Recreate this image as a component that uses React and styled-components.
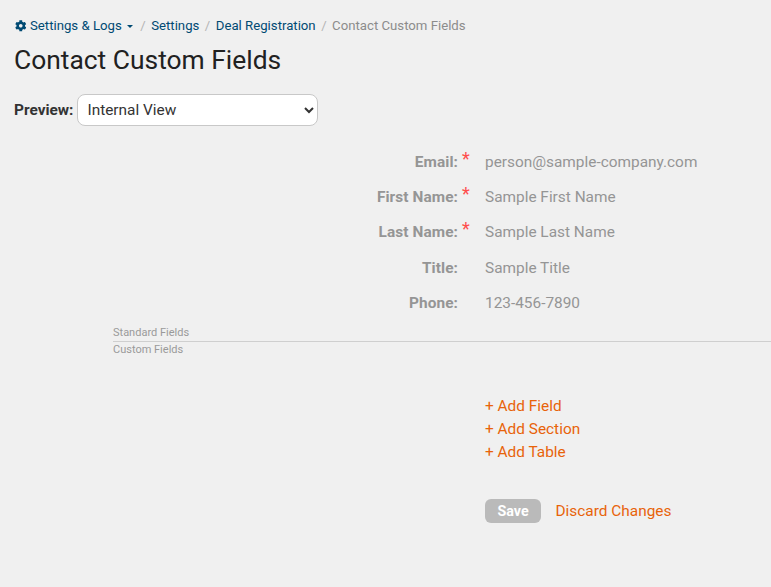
import styled, { createGlobalStyle } from "styled-components";

const GlobalStyle = createGlobalStyle`
  html, body {
    margin: 0;
    padding: 0;
    background: #f0f0f0;
    font-family: Roboto, "Liberation Sans", sans-serif;
  }
`;

const Page = styled.div`
  width: 771px;
  height: 587px;
  overflow: hidden;
  box-sizing: border-box;
  padding-top: 17px;
  background: #f0f0f0;
`;

const Breadcrumb = styled.nav`
  display: flex;
  align-items: center;
  height: 18px;
  padding-left: 15px;
  font-size: 13.2px;
  line-height: 18px;
`;

const CrumbLink = styled.a`
  display: flex;
  align-items: center;
  color: #004a73;
`;

const Gear = styled.svg`
  width: 11.5px;
  height: 11.5px;
  margin-right: 3.5px;
  fill: #004a73;
`;

const Caret = styled.span`
  width: 0;
  height: 0;
  margin: 0 2px 0 5px;
  border-top: 3.5px solid #004a73;
  border-left: 3.5px solid transparent;
  border-right: 3.5px solid transparent;
`;

const Slash = styled.span`
  margin: 0 5.5px;
  color: #b5b5b5;
`;

const CrumbCurrent = styled.span`
  color: #8c8c8c;
`;

const Title = styled.h1`
  margin: 8px 0 0 14px;
  font-size: 26.4px;
  line-height: 34px;
  font-weight: 400;
  color: #212121;
`;

const PreviewRow = styled.div`
  display: flex;
  align-items: center;
  gap: 4px;
  margin: 17px 0 0 14px;
`;

const PreviewLabel = styled.label`
  font-size: 15.4px;
  font-weight: 700;
  color: #333;
`;

const PreviewSelect = styled.select`
  width: 241px;
  height: 32px;
  box-sizing: border-box;
  padding: 0 5px;
  border: 1px solid #c8c8c8;
  border-radius: 8px;
  background: #fff;
  color: #333;
  font-family: inherit;
  font-size: 15.4px;
`;

const Fields = styled.div`
  display: flex;
  flex-direction: column;
  margin-top: 18.5px;
`;

const FieldRow = styled.div`
  display: grid;
  grid-template-columns: 458px 27px 1fr;
  height: 35.2px;
  align-items: center;
  font-size: 15.4px;
  color: #959595;
`;

const FieldLabel = styled.div`
  text-align: right;
  font-weight: 700;
  letter-spacing: 0.08px;
`;

const Required = styled.span`
  justify-self: start;
  margin: -7px 0 0 4px;
  color: #ff4d4d;
  font-size: 18px;
  line-height: 18px;
`;

const FieldValue = styled.div`
  grid-column: 3;
`;

const SectionDivider = styled.div`
  margin: 5.5px 0 0 113px;
  font-size: 11px;
  line-height: 13px;
  color: #9a9a9a;
`;

const SectionName = styled.div`
  padding: ${(props) => (props.$top ? "0 0 2px" : "1px 0 0")};
  border-bottom: ${(props) => (props.$top ? "1px solid #cfcfcf" : "none")};
`;

const Actions = styled.div`
  display: flex;
  flex-direction: column;
  gap: 4px;
  margin: 41px 0 0 485px;
`;

const OrangeLink = styled.a`
  font-size: 15.4px;
  line-height: 19px;
  color: #e8630a;
`;

const DiscardLink = styled(OrangeLink)`
  margin-top: 2px;
`;

const Footer = styled.div`
  display: flex;
  align-items: center;
  gap: 14.5px;
  margin: 37px 0 0 485px;
`;

const SaveButton = styled.button`
  width: 56px;
  height: 24px;
  padding: 0;
  border: 0;
  border-radius: 6px;
  background: #bababa;
  color: #fff;
  font-family: inherit;
  font-size: 14.3px;
  font-weight: 700;
`;

const fields = [
  { label: "Email:", value: "person@sample-company.com", required: true },
  { label: "First Name:", value: "Sample First Name", required: true },
  { label: "Last Name:", value: "Sample Last Name", required: true },
  { label: "Title:", value: "Sample Title" },
  { label: "Phone:", value: "123-456-7890" },
];

export default function App() {
  return (
    <Page>
      <GlobalStyle />
      <Breadcrumb>
        <CrumbLink>
          <Gear viewBox="0 0 512 512">
            <path d="M487.4 315.7l-42.6-24.6c4.3-23.2 4.3-47 0-70.2l42.6-24.6c4.9-2.8 7.1-8.6 5.5-14-11.1-35.6-30-67.8-54.7-94.6-3.8-4.1-10-5.1-14.8-2.3L380.8 110c-17.9-15.4-38.5-27.3-60.8-35.1V25.8c0-5.6-3.9-10.5-9.4-11.7-36.7-8.2-74.3-7.8-109.2 0-5.5 1.2-9.4 6.1-9.4 11.7V75c-22.2 7.9-42.8 19.8-60.8 35.1L88.7 85.5c-4.9-2.8-11-1.9-14.8 2.3-24.7 26.7-43.6 58.9-54.7 94.6-1.7 5.4.6 11.2 5.5 14L67.3 221c-4.3 23.2-4.3 47 0 70.2l-42.6 24.6c-4.9 2.8-7.1 8.6-5.5 14 11.1 35.6 30 67.8 54.7 94.6 3.8 4.1 10 5.1 14.8 2.3l42.6-24.6c17.9 15.4 38.5 27.3 60.8 35.1v49.2c0 5.6 3.9 10.5 9.4 11.7 36.7 8.2 74.3 7.8 109.2 0 5.5-1.2 9.4-6.1 9.4-11.7v-49.2c22.2-7.9 42.8-19.8 60.8-35.1l42.6 24.6c4.9 2.8 11 1.9 14.8-2.3 24.7-26.7 43.6-58.9 54.7-94.6 1.5-5.5-.7-11.3-5.6-14.1zM256 336c-44.1 0-80-35.9-80-80s35.9-80 80-80 80 35.9 80 80-35.9 80-80 80z" />
          </Gear>
          Settings &amp; Logs
          <Caret />
        </CrumbLink>
        <Slash>/</Slash>
        <CrumbLink>Settings</CrumbLink>
        <Slash>/</Slash>
        <CrumbLink>Deal Registration</CrumbLink>
        <Slash>/</Slash>
        <CrumbCurrent>Contact Custom Fields</CrumbCurrent>
      </Breadcrumb>
      <Title>Contact Custom Fields</Title>
      <PreviewRow>
        <PreviewLabel>Preview:</PreviewLabel>
        <PreviewSelect defaultValue="internal">
          <option value="internal">Internal View</option>
          <option value="partner">Partner View</option>
        </PreviewSelect>
      </PreviewRow>
      <Fields>
        {fields.map((field) => (
          <FieldRow key={field.label}>
            <FieldLabel>{field.label}</FieldLabel>
            {field.required && <Required>*</Required>}
            <FieldValue>{field.value}</FieldValue>
          </FieldRow>
        ))}
      </Fields>
      <SectionDivider>
        <SectionName $top>Standard Fields</SectionName>
        <SectionName>Custom Fields</SectionName>
      </SectionDivider>
      <Actions>
        <OrangeLink>+ Add Field</OrangeLink>
        <OrangeLink>+ Add Section</OrangeLink>
        <OrangeLink>+ Add Table</OrangeLink>
      </Actions>
      <Footer>
        <SaveButton>Save</SaveButton>
        <DiscardLink>Discard Changes</DiscardLink>
      </Footer>
    </Page>
  );
}
